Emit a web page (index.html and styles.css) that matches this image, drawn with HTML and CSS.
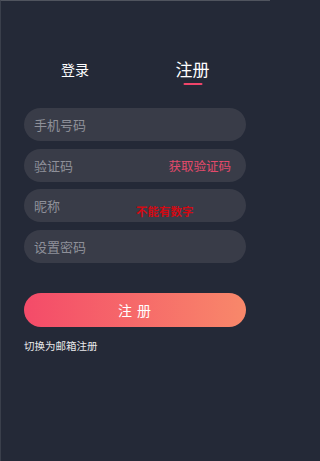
FILE: index.html
```html
<!DOCTYPE html>
<html lang="zh">
<head>
<meta charset="utf-8">
<title>注册</title>
<link rel="stylesheet" href="styles.css">
</head>
<body>
<div class="page">
  <div class="tabs">
    <div class="tab">登录</div>
    <div class="tab active">注册<span class="bar"></span></div>
  </div>
  <div class="form">
    <div class="field"><span class="ph">手机号码</span></div>
    <div class="field"><span class="ph">验证码</span><span class="code">获取验证码</span></div>
    <div class="field"><span class="ph">昵称</span><span class="warn">不能有数字</span></div>
    <div class="field"><span class="ph">设置密码</span></div>
  </div>
  <div class="submit">注 册</div>
  <div class="switch">切换为邮箱注册</div>
</div>
</body>
</html>
```
FILE: styles.css
```css
html, body {
  margin: 0;
  padding: 0;
  background: #242937;
}
body {
  font-family: "Noto Sans CJK SC", "Noto Sans", sans-serif;
  width: 270px;
  height: 461px;
  overflow: hidden;
}
.page {
  box-sizing: border-box;
  width: 270px;
  height: 461px;
  border-top: 1px solid #50545e;
  border-left: 1px solid #3a3f4b;
  padding: 57px 24px 0 23px;
}
.tabs {
  display: flex;
  gap: 17px;
  padding-left: 1px;
  height: 28px;
}
.tab {
  width: 100px;
  display: flex;
  flex-direction: column;
  align-items: center;
  color: #ffffff;
  font-size: 14px;
  line-height: 22px;
}
.tab.active {
  font-size: 17px;
  transform: translateX(0.5px);
}
.bar {
  width: 19px;
  height: 2px;
  margin-top: 3px;
  background: #f0456a;
  border-radius: 1px;
}
.form {
  margin-top: 22px;
  display: flex;
  flex-direction: column;
  gap: 7.5px;
}
.field {
  position: relative;
  height: 33px;
  border-radius: 17px;
  background: #393c48;
  display: flex;
  align-items: center;
  justify-content: space-between;
  padding: 0 15px 0 10px;
}
.ph {
  color: #8e9099;
  font-size: 13px;
}
.code {
  color: #e44a6b;
  font-size: 12.5px;
}
.warn {
  position: absolute;
  left: 112px;
  top: 16px;
  font-size: 11.5px;
  line-height: 12px;
  font-weight: bold;
  color: #d00a14;
  font-family: "Noto Sans CJK SC", serif;
}
.submit {
  margin-top: 30px;
  height: 34px;
  border-radius: 17px;
  background: linear-gradient(90deg, #f44b69 0%, #f8886a 100%);
  color: #ffffff;
  font-size: 14px;
  display: flex;
  align-items: center;
  justify-content: center;
  letter-spacing: 1px;
}
.switch {
  margin-top: 11px;
  color: #e8e8ea;
  font-size: 10.5px;
  line-height: 16px;
}
```
